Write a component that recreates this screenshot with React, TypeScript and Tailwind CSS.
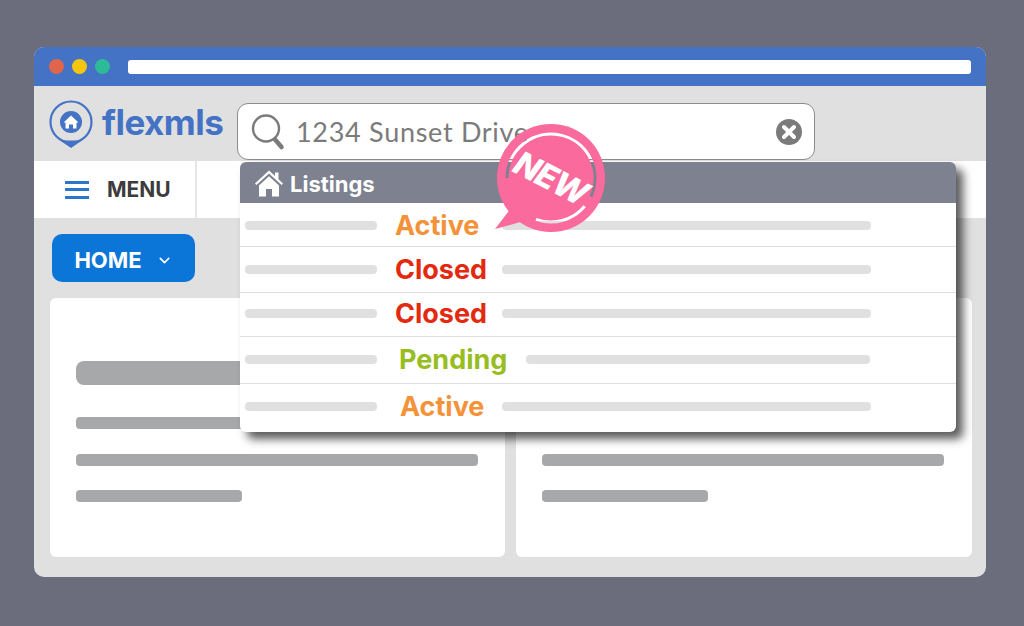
import { ChevronDown } from "lucide-react";

const rows = [
  { label: "Active", tone: "text-[#f4923a]", h: "h-[44px]", labelWidth: "w-[107px]", gap: "ml-[18px]", rest: "w-[369px]", lift: "pt-[1px]" },
  { label: "Closed", tone: "text-[#e3290f]", h: "h-[46px]", labelWidth: "w-[107px]", gap: "ml-[18px]", rest: "w-[369px]", lift: "pb-[1px]" },
  { label: "Closed", tone: "text-[#e3290f]", h: "h-[44px]", labelWidth: "w-[107px]", gap: "ml-[18px]", rest: "w-[369px]", lift: "pb-[3px]" },
  { label: "Pending", tone: "text-[#97bd1f]", h: "h-[47px]", labelWidth: "w-[127px]", gap: "ml-[22px]", rest: "w-[344px]", lift: "pb-[2px]" },
  { label: "Active", tone: "text-[#f4923a]", h: "h-[48px]", labelWidth: "w-[102px]", gap: "ml-[23px]", rest: "w-[369px]", lift: "pb-[3px]" },
];

function HomeGlyph({ className }: { className: string }) {
  return (
    <svg viewBox="0 0 30 28" className={className} fill="currentColor">
      <path d="M1 14.500 15 1.500l6 5.500V3.500h3.500v6.800L29 14.500l-1.400 1.500L15 4.500 2.400 16z" />
      <path d="M5 16.500 15 7.200l10 9.300V27.500h-7v-7.500h-6v7.500H5z" />
    </svg>
  );
}

function Logo() {
  return (
    <svg viewBox="0 0 46 50" className="h-[50px] w-[46px]">
      <circle cx="23" cy="23" r="20.500" fill="none" stroke="#4472c4" strokeWidth="2.200" />
      <path d="M12 41.500h22L23 49z" fill="#4472c4" />
      <circle cx="23" cy="23" r="11" fill="#4472c4" />
      <path d="M15.500 23.500 23 16.500l7.500 7h-2v6h-3.500v-4h-4v4h-3.500v-6z" fill="#fff" />
    </svg>
  );
}

function SearchGlyph() {
  return (
    <svg viewBox="0 0 34 38" className="h-[38px] w-[34px]" fill="none" stroke="#7b7b7b">
      <circle cx="15" cy="15.500" r="13" strokeWidth="2.400" />
      <path d="M24 26.500 30.500 34" strokeWidth="4.500" strokeLinecap="round" />
    </svg>
  );
}

function NewBubble() {
  return (
    <svg viewBox="0 0 112 112" className="absolute left-[494px] top-[123px] h-[112px] w-[112px]">
      <mask id="bubble-ring">
        <rect width="112" height="112" fill="#fff" />
        <path d="M13 55A44 44 0 1 1 96.900 73.600" fill="none" stroke="#000" strokeWidth="3" />
        <path d="M90.700 83.300A44 44 0 0 1 42 96.300" fill="none" stroke="#000" strokeWidth="3" />
      </mask>
      <g mask="url(#bubble-ring)" fill="#fa6a9c">
        <circle cx="57" cy="55" r="54" />
        <path d="M21 80 1 106l40-11z" />
      </g>
      <text
        x="57"
        y="67"
        textAnchor="middle"
        transform="rotate(27 57 55)"
        fill="#fff"
        fontSize="33"
        fontWeight="800"
        fontStyle="italic"
        letterSpacing="-1"
        fontFamily="Inter, sans-serif"
      >
        NEW
      </text>
    </svg>
  );
}

function SkeletonCard({ noHeading }: { noHeading?: boolean }) {
  return (
    <div className={`h-[259px] rounded-[6px] bg-white pl-[26px] pt-[63px] ${noHeading ? "w-[456px]" : "w-[455px]"}`}>
      <div className={`h-[24px] w-[190px] rounded-[8px] bg-[#a6a8a9] ${noHeading ? "invisible" : ""}`} />
      <div className="mt-[32px] h-[12px] w-[200px] rounded-[4px] bg-[#a6a8a9]" />
      <div className="mt-[25px] h-[12px] w-[402px] rounded-[4px] bg-[#a6a8a9]" />
      <div className="mt-[24px] h-[12px] w-[166px] rounded-[4px] bg-[#a6a8a9]" />
    </div>
  );
}

export default function App() {
  return (
    <div className="relative h-[626px] w-[1024px] overflow-hidden bg-[#6b6d7d] px-[34px] pt-[47px] font-['Inter',sans-serif]">
      <div className="h-[530px] w-[952px] overflow-hidden rounded-[10px] bg-[#e0e0e1]">
        <div className="flex h-[39px] items-center bg-[#4472c4] px-[15px]">
          <span className="h-[15px] w-[15px] rounded-full bg-[#e0654a]" />
          <span className="ml-[8px] h-[15px] w-[15px] rounded-full bg-[#f5c60f]" />
          <span className="ml-[8px] h-[15px] w-[15px] rounded-full bg-[#2dbb97]" />
          <div className="ml-[18px] h-[14px] flex-1 rounded-[3px] bg-white" />
        </div>

        <div className="flex h-[75px] items-start pl-[14px] pt-[13px]">
          <Logo />
          <span className="ml-[8px] mt-[1px] w-[135px] text-[35px] leading-[44px] font-bold tracking-[-0.5px] text-[#4472c4]">
            flexmls
          </span>
          <div className="mt-[4px] flex h-[57px] w-[578px] items-center rounded-[11px] border border-[#8c8c8c] bg-white pl-[13px] pr-[12px]">
            <SearchGlyph />
            <span className="ml-[11px] flex-1 pt-[2px] font-['Lato',sans-serif] text-[27px] tracking-[0.7px] text-[#7b7b7b]">
              1234 Sunset Drive
            </span>
            <svg viewBox="0 0 26 26" className="h-[26px] w-[26px]">
              <circle cx="13" cy="13" r="13" fill="#7b7b7b" />
              <path d="m8 8 10 10M18 8 8 18" stroke="#fff" strokeWidth="4" strokeLinecap="round" />
            </svg>
          </div>
        </div>

        <div className="flex h-[57px] bg-white">
          <div className="flex w-[163px] items-center border-r-2 border-[#e6e6e6] pl-[31px]">
            <div className="flex w-[24px] flex-col gap-[4.500px]">
              <span className="h-[3px] bg-[#2a78cc]" />
              <span className="h-[3px] bg-[#2a78cc]" />
              <span className="h-[3px] bg-[#2a78cc]" />
            </div>
            <span className="ml-[18px] text-[21px] font-bold text-[#3c3c3c]">MENU</span>
          </div>
        </div>

        <div className="pl-[16px] pr-[14px] pt-[16px]">
          <div className="ml-[2px] flex h-[48px] w-[143px] items-center justify-center gap-[14px] rounded-[10px] bg-[#0b76d8] pt-[4px] text-white">
            <span className="text-[22px] font-bold">HOME</span>
            <ChevronDown size={17} strokeWidth={2.200} />
          </div>
          <div className="mt-[16px] flex gap-[11px]">
            <SkeletonCard />
            <SkeletonCard noHeading />
          </div>
        </div>
      </div>

      <div className="absolute left-[240px] top-[162px] w-[716px] overflow-hidden rounded-[6px] bg-white shadow-[7px_7px_10px_rgba(0,0,0,0.65)]">
        <div className="flex h-[41px] items-center gap-[6px] bg-[#7e8290] pl-[14px] text-white">
          <HomeGlyph className="h-[28px] w-[30px]" />
          <span className="pt-[3px] text-[22px] font-bold">Listings</span>
        </div>
        {rows.map((row, i) => (
          <div key={i} className={`flex ${row.h} ${row.lift} items-center border-b border-[#dedede] pl-[5px] last:border-b-0`}>
            <span className="h-[9px] w-[132px] rounded-[4px] bg-[#e0e0e0]" />
            <span className={`${row.gap} ${row.labelWidth} pt-[2px] text-[27px] font-bold ${row.tone}`}>{row.label}</span>
            <span className={`h-[9px] ${row.rest} rounded-[4px] bg-[#e0e0e0]`} />
          </div>
        ))}
      </div>

      <NewBubble />
    </div>
  );
}
